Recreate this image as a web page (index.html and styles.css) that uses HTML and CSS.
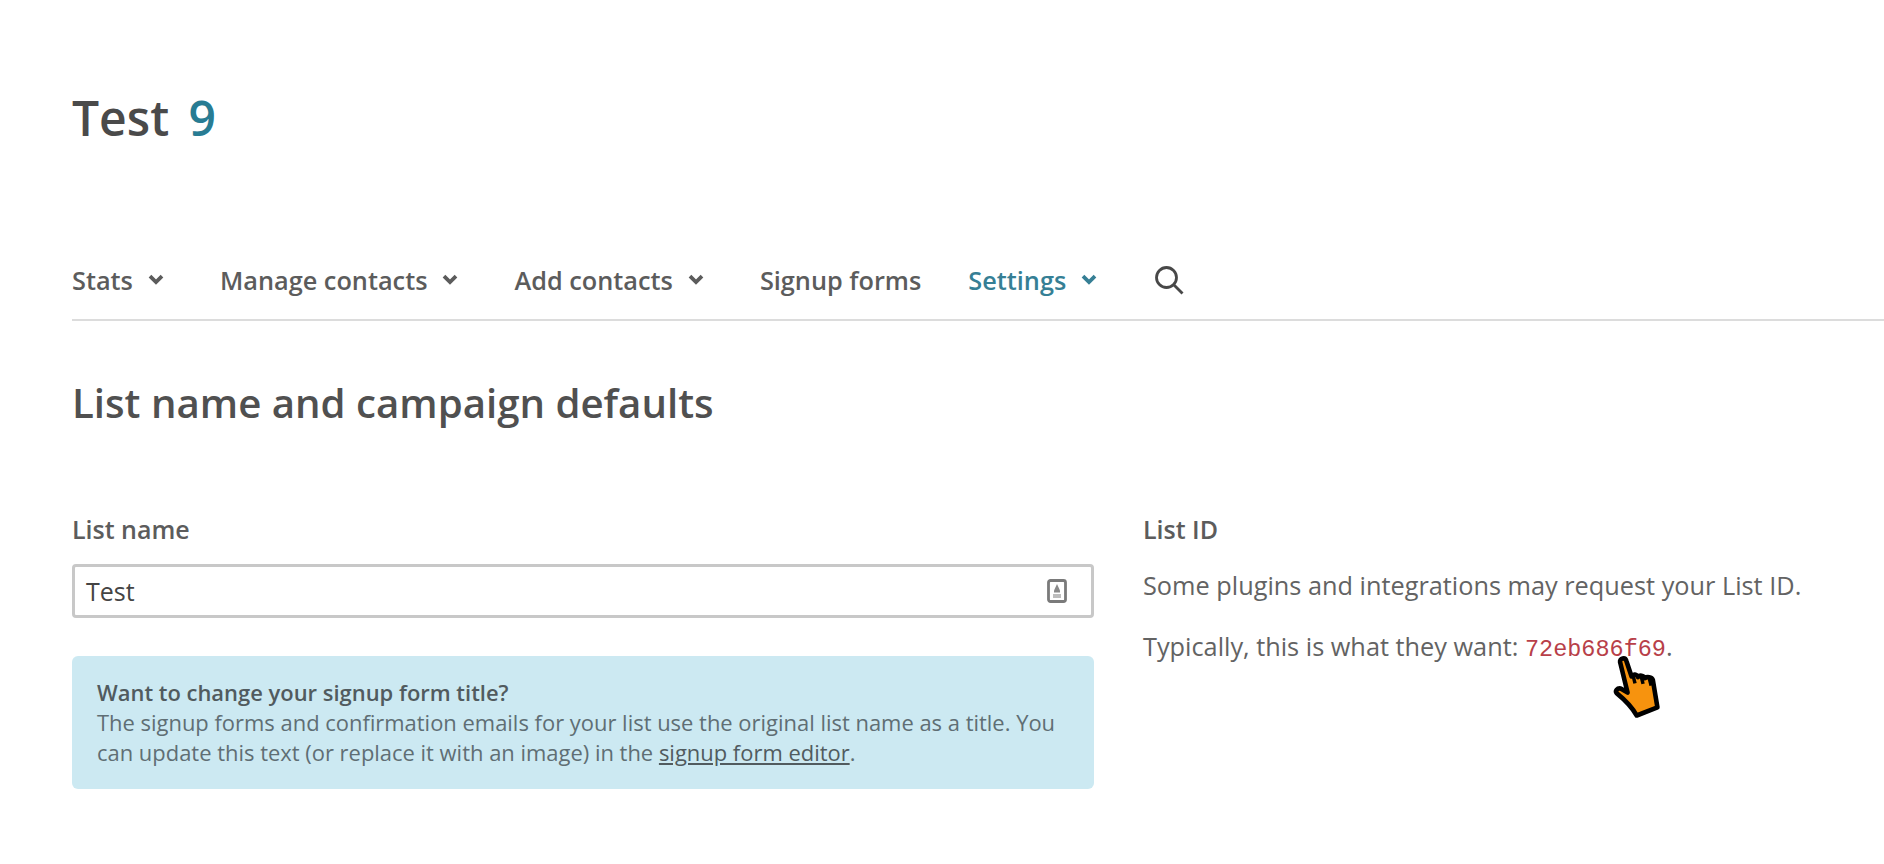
FILE: index.html
```html
<!DOCTYPE html>
<html lang="en">
<head>
<meta charset="utf-8">
<title>Test – Settings</title>
<link rel="stylesheet" href="styles.css">
</head>
<body>
<div class="page">
  <h1 class="title">Test <span class="count">9</span></h1>
  <nav class="tabs">
    <a class="tab">Stats <svg class="chev" viewBox="0 0 12 8"><path d="M1.500 1.500 6 6l4.500-4.500"/></svg></a>
    <a class="tab">Manage contacts <svg class="chev" viewBox="0 0 12 8"><path d="M1.500 1.500 6 6l4.500-4.500"/></svg></a>
    <a class="tab">Add contacts <svg class="chev" viewBox="0 0 12 8"><path d="M1.500 1.500 6 6l4.500-4.500"/></svg></a>
    <a class="tab tab-plain">Signup forms</a>
    <a class="tab active">Settings <svg class="chev" viewBox="0 0 12 8"><path d="M1.500 1.500 6 6l4.500-4.500"/></svg></a>
    <svg class="search" viewBox="0 0 30 30"><circle cx="12.500" cy="12.500" r="10"/><path d="M20 20l8.500 8.500"/></svg>
  </nav>
  <h2 class="section">List name and campaign defaults</h2>
  <div class="cols">
    <div class="col-left">
      <label class="label">List name</label>
      <div class="input">
        <span class="input-text">Test</span>
        <svg class="card-icon" viewBox="0 0 20 24"><rect x="1.500" y="1.500" width="17" height="21" rx="2"/><path class="fill" d="M10 5l3 6.500v2H7v-2z"/><path class="fill light" d="M6 15h8v4H6z"/></svg>
      </div>
      <div class="notice">
        <strong>Want to change your signup form title?</strong><br>
        The signup forms and confirmation emails for your list use the original list name as a title. You can update this text (or replace it with an image) in the <a class="link">signup form editor</a>.
      </div>
    </div>
    <div class="col-right">
      <label class="label">List ID</label>
      <p class="para para-first">Some plugins and integrations may request your List ID.</p>
      <p class="para">Typically, this is what they want: <code class="code">72eb686f69</code>.</p>
      <svg class="hand" viewBox="4 4 52.200 60.900"><path d="M14.500 14.500C14 11 19 10 20 13.500L24.500 27C26 24.500 29 25 30 27.500C31.500 25.500 35 26 36 28.500C38 27 42 27.500 43 30L47 54L29 61C24 52 17 46 11.500 41.500C10 39.500 12 37 15 37.500L21 41Z"/><path class="finger" d="M26 27l1.500 6M33 27.500l1.500 6M40 29l1.500 6"/></svg>
    </div>
  </div>
</div>
</body>
</html>
```
FILE: styles.css
```css
* { box-sizing: border-box; }
html, body { margin: 0; background: #fff; }
body { font-family: "Open Sans", sans-serif; color: #4a4a4a; overflow: hidden; height: 864px; }
.page { padding: 84px 0 0 72px; }
.title { margin: 0; font-size: 48px; line-height: 68px; font-weight: 600; color: #4a4a4a; word-spacing: 7px; }
.count { color: #287c93; }
.tabs { display: flex; align-items: center; height: 72px; margin-top: 97px; padding-bottom: 9px; border-bottom: 2px solid #dcdcdc; }
.tab { display: flex; align-items: center; gap: 15px; font-size: 25.300px; font-weight: 600; color: #5c5c5c; margin-right: 56px; white-space: nowrap; }
.tab-plain { margin-right: 47px; }
.tab.active { color: #367f95; margin-right: 57px; }
.chev { width: 16px; height: 11px; fill: none; stroke: currentColor; stroke-width: 2.800; }
.search { width: 30px; height: 30px; fill: none; stroke: #484848; stroke-width: 2.800; }
.section { margin: 54px 0 0; font-size: 40.200px; line-height: 56px; font-weight: 600; color: #505050; }
.cols { display: flex; margin-top: 82px; gap: 49px; }
.col-left { width: 1022px; }
.col-right { position: relative; flex: 1; }
.label { display: block; font-size: 25px; line-height: 32px; font-weight: 600; color: #5c5c5c; }
.input { display: flex; align-items: center; justify-content: space-between; height: 54px; margin-top: 19px; padding: 0 24px 0 11px; border: 3px solid #c8c8c8; border-radius: 4px; }
.input-text { font-size: 25px; color: #444; }
.card-icon { width: 20px; height: 24px; fill: none; stroke: #7a7a7a; stroke-width: 2.800; }
.card-icon .fill { fill: #8a8a8a; stroke: none; }
.card-icon .light { fill: #bdbdbd; }
.notice { margin-top: 38px; padding: 22px 24px 21px 25px; background: #cce9f2; border-radius: 6px; font-size: 21.950px; line-height: 30px; color: #5f6e74; }
.notice strong { font-weight: 600; color: #515b5f; }
.link { text-decoration: underline; color: #515b5f; }
.para { margin: 0; font-size: 25.300px; line-height: 34px; color: #636363; white-space: nowrap; }
.para-first { margin-top: 23px; }
.para + .para { margin-top: 27px; }
.code { font-family: "Liberation Mono", monospace; font-size: 23.500px; color: #b83f49; }
.hand { position: absolute; left: 465px; top: 137px; width: 60px; height: 70px; }
.hand path { fill: #f7930e; stroke: #000; stroke-width: 4; stroke-linejoin: round; }
.hand .finger { fill: none; stroke-width: 3; }
```
